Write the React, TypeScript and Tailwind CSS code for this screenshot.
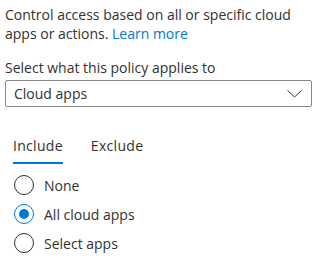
const options = ["None", "All cloud apps", "Select apps"];

export default function App() {
  const selected = "All cloud apps";

  return (
    <div
      className="w-[333px] h-[262px] bg-white text-[#323130] px-[5px] pt-[5px] text-[14px] leading-[19px]"
      style={{ fontFamily: '"Segoe UI", "Open Sans", sans-serif' }}
    >
      <p className="w-[300px]">
        Control access based on all or specific cloud apps or actions.{" "}
        <a href="#" className="text-[#0078d4]">
          Learn more
        </a>
      </p>

      <div className="mt-[15px]">Select what this policy applies to</div>
      <div className="mt-[3px] w-[307px] h-[27px] border border-[#8a8886] rounded-[2px] flex items-center justify-between pl-[8px] pr-[9px]">
        <span>Cloud apps</span>
        <svg width="15" height="8" viewBox="0 0 15 8" fill="none">
          <path d="M0.5 0.5L7.5 7L14.5 0.5" stroke="#323130" strokeWidth="1" />
        </svg>
      </div>

      {/* tabs */}
      <div className="mt-[29px] flex gap-[28px] pl-[8px]">
        <div className="flex flex-col">
          <span className="leading-[20px] tracking-[0.3px]">Include</span>
          <span className="mt-[6px] h-[2px] bg-[#0078d4]" />
        </div>
        <span className="leading-[20px] tracking-[0.3px]">Exclude</span>
      </div>

      {/* radio group */}
      <div className="mt-[11px] flex flex-col gap-[9px] pl-[9px]">
        {options.map((opt) => (
          <label key={opt} className="flex items-center gap-[10px]">
            <span
              className={
                opt === selected
                  ? "w-[20px] h-[20px] rounded-full border border-[#0078d4] flex items-center justify-center"
                  : "w-[20px] h-[20px] rounded-full border border-[#323130]"
              }
            >
              {opt === selected && <span className="w-[10px] h-[10px] rounded-full bg-[#0078d4]" />}
            </span>
            <span>{opt}</span>
          </label>
        ))}
      </div>
    </div>
  );
}
